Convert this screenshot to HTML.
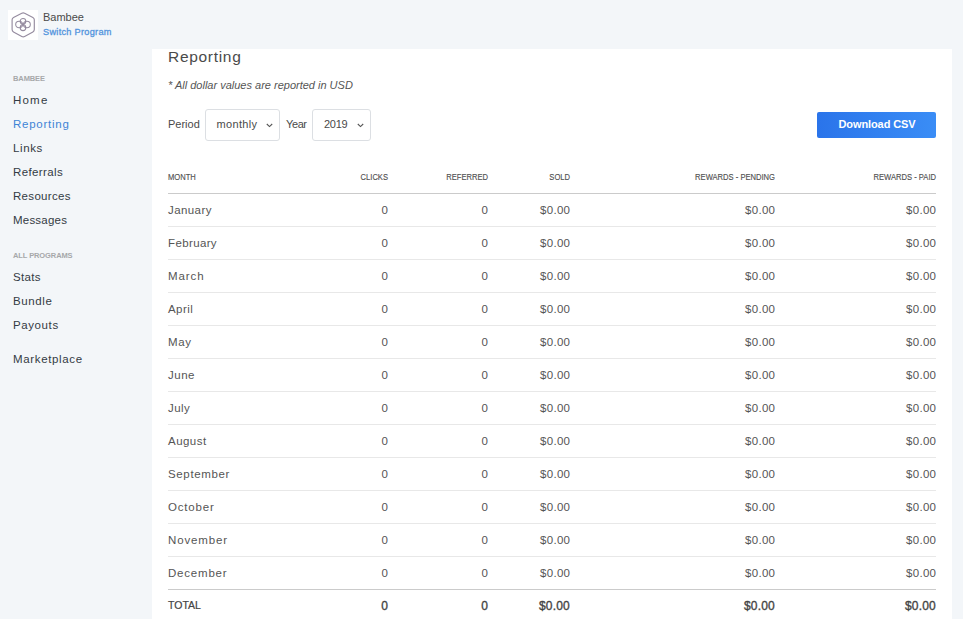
<!DOCTYPE html>
<html><head><meta charset="utf-8">
<style>
*{margin:0;padding:0;box-sizing:border-box}
html,body{width:963px;height:619px;overflow:hidden;background:#f3f6f9;font-family:"Liberation Sans",sans-serif;position:relative}
.a{position:absolute;white-space:nowrap;line-height:1}
.logo{position:absolute;left:8px;top:10px;width:30px;height:30px;background:#fff}
.brand{left:43px;top:12px;font-size:11px;color:#4a4a4a}
.switch{left:43px;top:27.7px;font-size:9.2px;color:#5294dd;-webkit-text-stroke:0.3px #5294dd;letter-spacing:0.28px}
.sec{left:13px;font-size:7.5px;color:#a6a8aa;font-weight:bold;letter-spacing:-0.1px}
.nav{left:13px;font-size:11.5px;color:#333b44;letter-spacing:0.5px}
.nav.act{color:#3d84d6}
.panel{position:absolute;left:152px;top:49px;width:800px;height:600px;background:#fff}
.title{left:168px;top:49px;font-size:15.5px;color:#4a4a4a;letter-spacing:0.7px}
.note{left:168px;top:80px;font-size:11px;color:#555;font-style:italic}
.lbl{font-size:11px;color:#4a4a4a;top:119px}
.sel{position:absolute;top:109px;height:32px;border:1px solid #dcdfe3;border-radius:3px;background:#fff}
.selt{font-size:11px;color:#4a4a4a;top:119px}
.chev{position:absolute;top:122.5px}
.btn{position:absolute;left:817px;top:112px;width:119px;height:26px;border-radius:2px;background:linear-gradient(90deg,#2a74ea,#3a8df6)}
.btnt{left:838.5px;top:119px;font-size:11px;color:#fff;font-weight:bold;letter-spacing:-0.1px}
.th{font-size:7.6px;color:#4f4f4f;-webkit-text-stroke:0.12px #4f4f4f;top:173.5px;transform:scaleY(1.15);transform-origin:0 100%}
.r{text-align:right}
.hline{position:absolute;left:168px;width:768px;height:1px;background:#cbcbcb}
.line{position:absolute;left:168px;width:768px;height:1px;background:#e8e8e8}
.td{font-size:11.5px;color:#555;letter-spacing:0.3px}
.m{left:168px}
.td.r{margin-right:-0.3px}
.td.r.tb{margin-right:0}
.tot{font-size:10.5px;color:#444;-webkit-text-stroke:0.2px #444}
.tb{font-size:12px;color:#444;-webkit-text-stroke:0.35px #444;letter-spacing:0.2px}
</style></head><body>
<div class="logo"><svg width="30" height="30" viewBox="0 0 29 29" style="display:block;width:29px;height:29px;margin:0.3px 0 0 0.2px">
<path d="M13.78 3.23 Q15.20 2.50 16.62 3.23 L24.88 7.47 Q26.30 8.20 26.30 9.80 L26.30 19.60 Q26.30 21.20 24.89 21.96 L16.61 26.44 Q15.20 27.20 13.79 26.44 L5.51 21.96 Q4.10 21.20 4.10 19.60 L4.10 9.80 Q4.10 8.20 5.52 7.47 Z" fill="none" stroke="#958b9f" stroke-width="1.15"/>
<g fill="none" stroke="#958b9f" stroke-width="1.05">
<ellipse cx="15" cy="11.3" rx="2.8" ry="2.9"/><ellipse cx="15" cy="17.7" rx="2.8" ry="2.9"/><ellipse cx="11.1" cy="14.5" rx="3.4" ry="3.2"/><ellipse cx="18.9" cy="14.5" rx="3.4" ry="3.2"/>
</g></svg></div>
<div class="a brand">Bambee</div>
<div class="a switch">Switch Program</div>

<div class="a sec" style="top:75px">BAMBEE</div>
<div class="a nav" style="top:95px;letter-spacing:1.2px">Home</div>
<div class="a nav act" style="top:119px;letter-spacing:0.75px">Reporting</div>
<div class="a nav" style="top:143px;letter-spacing:0.6px">Links</div>
<div class="a nav" style="top:167px;letter-spacing:0.38px">Referrals</div>
<div class="a nav" style="top:191px;letter-spacing:0.31px">Resources</div>
<div class="a nav" style="top:215px;letter-spacing:0.21px">Messages</div>
<div class="a sec" style="top:252px">ALL PROGRAMS</div>
<div class="a nav" style="top:272px;letter-spacing:0.3px">Stats</div>
<div class="a nav" style="top:296px;letter-spacing:0.6px">Bundle</div>
<div class="a nav" style="top:320px;letter-spacing:0.6px">Payouts</div>
<div class="a nav" style="top:354px;letter-spacing:0.65px">Marketplace</div>

<div class="panel"></div>
<div class="a title">Reporting</div>
<div class="a note">* All dollar values are reported in USD</div>

<div class="a lbl" style="left:168px">Period</div>
<div class="sel" style="left:205px;width:75px"></div>
<div class="a selt" style="left:216.5px;letter-spacing:0.35px">monthly</div>
<svg class="chev" style="left:266px" width="7" height="5" viewBox="0 0 7 5"><path d="M0.8 1 L3.5 3.6 L6.2 1" fill="none" stroke="#555" stroke-width="1.1"/></svg>
<div class="a lbl" style="left:286px;letter-spacing:-0.4px">Year</div>
<div class="sel" style="left:312px;width:59px"></div>
<div class="a selt" style="left:324px;letter-spacing:-0.3px">2019</div>
<svg class="chev" style="left:357px" width="7" height="5" viewBox="0 0 7 5"><path d="M0.8 1 L3.5 3.6 L6.2 1" fill="none" stroke="#555" stroke-width="1.1"/></svg>

<div class="btn"></div>
<div class="a btnt">Download CSV</div>

<div class="a th" style="left:168px">MONTH</div>
<div class="a th r" style="right:575px">CLICKS</div>
<div class="a th r" style="right:475px">REFERRED</div>
<div class="a th r" style="right:393px">SOLD</div>
<div class="a th r" style="right:188px">REWARDS - PENDING</div>
<div class="a th r" style="right:27px">REWARDS - PAID</div>
<div class="hline" style="top:193px"></div>
<div class="a td m" style="top:205px;letter-spacing:0.42px">January</div>
<div class="a td r" style="right:575px;top:205px">0</div>
<div class="a td r" style="right:475px;top:205px">0</div>
<div class="a td r" style="right:393px;top:205px">$0.00</div>
<div class="a td r" style="right:188px;top:205px">$0.00</div>
<div class="a td r" style="right:27px;top:205px">$0.00</div>
<div class="line" style="top:226px"></div>
<div class="a td m" style="top:238px;letter-spacing:0.37px">February</div>
<div class="a td r" style="right:575px;top:238px">0</div>
<div class="a td r" style="right:475px;top:238px">0</div>
<div class="a td r" style="right:393px;top:238px">$0.00</div>
<div class="a td r" style="right:188px;top:238px">$0.00</div>
<div class="a td r" style="right:27px;top:238px">$0.00</div>
<div class="line" style="top:259px"></div>
<div class="a td m" style="top:271px;letter-spacing:0.9px">March</div>
<div class="a td r" style="right:575px;top:271px">0</div>
<div class="a td r" style="right:475px;top:271px">0</div>
<div class="a td r" style="right:393px;top:271px">$0.00</div>
<div class="a td r" style="right:188px;top:271px">$0.00</div>
<div class="a td r" style="right:27px;top:271px">$0.00</div>
<div class="line" style="top:292px"></div>
<div class="a td m" style="top:304px;letter-spacing:0.45px">April</div>
<div class="a td r" style="right:575px;top:304px">0</div>
<div class="a td r" style="right:475px;top:304px">0</div>
<div class="a td r" style="right:393px;top:304px">$0.00</div>
<div class="a td r" style="right:188px;top:304px">$0.00</div>
<div class="a td r" style="right:27px;top:304px">$0.00</div>
<div class="line" style="top:325px"></div>
<div class="a td m" style="top:337px;letter-spacing:0.6px">May</div>
<div class="a td r" style="right:575px;top:337px">0</div>
<div class="a td r" style="right:475px;top:337px">0</div>
<div class="a td r" style="right:393px;top:337px">$0.00</div>
<div class="a td r" style="right:188px;top:337px">$0.00</div>
<div class="a td r" style="right:27px;top:337px">$0.00</div>
<div class="line" style="top:358px"></div>
<div class="a td m" style="top:370px;letter-spacing:0.5px">June</div>
<div class="a td r" style="right:575px;top:370px">0</div>
<div class="a td r" style="right:475px;top:370px">0</div>
<div class="a td r" style="right:393px;top:370px">$0.00</div>
<div class="a td r" style="right:188px;top:370px">$0.00</div>
<div class="a td r" style="right:27px;top:370px">$0.00</div>
<div class="line" style="top:391px"></div>
<div class="a td m" style="top:403px;letter-spacing:0.43px">July</div>
<div class="a td r" style="right:575px;top:403px">0</div>
<div class="a td r" style="right:475px;top:403px">0</div>
<div class="a td r" style="right:393px;top:403px">$0.00</div>
<div class="a td r" style="right:188px;top:403px">$0.00</div>
<div class="a td r" style="right:27px;top:403px">$0.00</div>
<div class="line" style="top:424px"></div>
<div class="a td m" style="top:436px;letter-spacing:0.46px">August</div>
<div class="a td r" style="right:575px;top:436px">0</div>
<div class="a td r" style="right:475px;top:436px">0</div>
<div class="a td r" style="right:393px;top:436px">$0.00</div>
<div class="a td r" style="right:188px;top:436px">$0.00</div>
<div class="a td r" style="right:27px;top:436px">$0.00</div>
<div class="line" style="top:457px"></div>
<div class="a td m" style="top:469px;letter-spacing:0.65px">September</div>
<div class="a td r" style="right:575px;top:469px">0</div>
<div class="a td r" style="right:475px;top:469px">0</div>
<div class="a td r" style="right:393px;top:469px">$0.00</div>
<div class="a td r" style="right:188px;top:469px">$0.00</div>
<div class="a td r" style="right:27px;top:469px">$0.00</div>
<div class="line" style="top:490px"></div>
<div class="a td m" style="top:502px;letter-spacing:0.8px">October</div>
<div class="a td r" style="right:575px;top:502px">0</div>
<div class="a td r" style="right:475px;top:502px">0</div>
<div class="a td r" style="right:393px;top:502px">$0.00</div>
<div class="a td r" style="right:188px;top:502px">$0.00</div>
<div class="a td r" style="right:27px;top:502px">$0.00</div>
<div class="line" style="top:523px"></div>
<div class="a td m" style="top:535px;letter-spacing:0.85px">November</div>
<div class="a td r" style="right:575px;top:535px">0</div>
<div class="a td r" style="right:475px;top:535px">0</div>
<div class="a td r" style="right:393px;top:535px">$0.00</div>
<div class="a td r" style="right:188px;top:535px">$0.00</div>
<div class="a td r" style="right:27px;top:535px">$0.00</div>
<div class="line" style="top:556px"></div>
<div class="a td m" style="top:568px;letter-spacing:0.8px">December</div>
<div class="a td r" style="right:575px;top:568px">0</div>
<div class="a td r" style="right:475px;top:568px">0</div>
<div class="a td r" style="right:393px;top:568px">$0.00</div>
<div class="a td r" style="right:188px;top:568px">$0.00</div>
<div class="a td r" style="right:27px;top:568px">$0.00</div>
<div class="hline" style="top:589px"></div>
<div class="a tot m" style="top:600px">TOTAL</div>
<div class="a td r tb" style="right:575px;top:599.5px">0</div>
<div class="a td r tb" style="right:475px;top:599.5px">0</div>
<div class="a td r tb" style="right:393px;top:599.5px">$0.00</div>
<div class="a td r tb" style="right:188px;top:599.5px">$0.00</div>
<div class="a td r tb" style="right:27px;top:599.5px">$0.00</div>
</body></html>
